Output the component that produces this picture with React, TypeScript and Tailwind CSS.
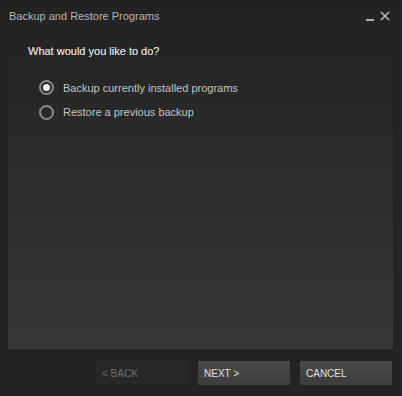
import { useState } from "react";

const options = [
  { id: "backup", label: "Backup currently installed programs" },
  { id: "restore", label: "Restore a previous backup" },
];

export default function App() {
  const [choice, setChoice] = useState("backup");

  return (
    <div
      className="w-[402px] h-[396px] bg-[#232323] flex flex-col border-r border-[#1c2a38] border-t border-t-[#1a1f26] text-[11px]"
      style={{ fontFamily: "Arial, 'Liberation Sans', sans-serif" }}
    >
      {/* Title bar */}
      <div className="h-[31px] flex items-center justify-between pl-[9px] pr-[11px] shrink-0">
        <span className="text-[#b4b4b4] text-[11px] -mt-[1px]">Backup and Restore Programs</span>
        <div className="flex items-center gap-[6px] -mt-[2px]">
          <span className="block w-[8px] h-[2px] bg-[#b0b0b0] mt-[9px]" />
          <svg width="10" height="10" viewBox="0 0 10 10">
            <path d="M1 1L9 9M9 1L1 9" stroke="#b8b8b8" strokeWidth="1.6" />
          </svg>
        </div>
      </div>

      {/* Content panel */}
      <div className="mx-[8px] h-[317px] bg-gradient-to-b from-[#232323] to-[#373737] px-[20px] pt-[11px]">
        <p className="text-[#d2d2d2] text-[11px] [text-shadow:0_0_0.3px_#d2d2d2]">What would you like to do?</p>
        <div className="mt-[20px] ml-[11px] flex flex-col gap-[8px]">
          {options.map((o) => (
            <label
              key={o.id}
              className="flex items-center gap-[9px] cursor-pointer"
              onClick={() => setChoice(o.id)}
            >
              <span className="w-[15px] h-[15px] rounded-full border-[2px] border-[#8a8a8a] flex items-center justify-center">
                {choice === o.id && <span className="w-[7px] h-[7px] rounded-full bg-[#f2f2f2]" />}
              </span>
              <span className="text-[#c4c4c4] text-[11px]">{o.label}</span>
            </label>
          ))}
        </div>
      </div>

      {/* Buttons */}
      <div className="flex justify-end gap-[10px] pr-[9px] pt-[12px]">
        <button disabled className="w-[92px] h-[24px] bg-[#282828] text-[#6e6e6e] text-[10px] text-left pl-[6px]">
          &lt; BACK
        </button>
        <button className="w-[92px] h-[24px] bg-gradient-to-b from-[#4a4a4a] to-[#3c3c3c] text-[#e0e0e0] text-[10px] text-left pl-[6px]">
          NEXT &gt;
        </button>
        <button className="w-[92px] h-[24px] bg-gradient-to-b from-[#4a4a4a] to-[#3c3c3c] text-[#e0e0e0] text-[10px] text-left pl-[6px]">
          CANCEL
        </button>
      </div>
    </div>
  );
}
